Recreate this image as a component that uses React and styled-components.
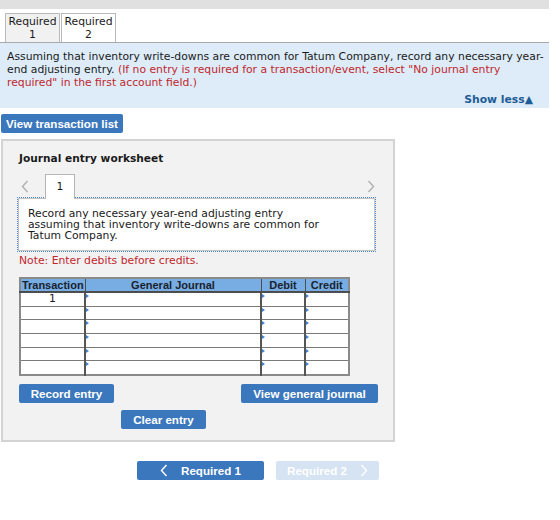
import React from "react";
import styled, { createGlobalStyle } from "styled-components";

const GlobalStyle = createGlobalStyle`
  body {
    margin: 0;
    background: #ffffff;
    font-family: "DejaVu Sans", Verdana, sans-serif;
    color: #1a1a1a;
  }
`;

const Page = styled.div`
  width: 560px;
  height: 520px;
  overflow: hidden;
  display: flex;
  flex-direction: column;
  align-items: flex-start;
`;

const TopBar = styled.div`
  width: 549px;
  height: 9px;
  background: #e0e0e0;
`;

const TabRow = styled.div`
  display: flex;
  margin-top: 4px;
  padding-left: 5px;
  gap: 1px;
`;

const Tab = styled.div`
  width: 53px;
  height: 27px;
  border: 1px solid #b9b9b9;
  border-bottom: none;
  background: ${(p) => (p.$active ? "#ffffff" : "#f1f1f1")};
  font-size: 10.8px;
  line-height: 13px;
  text-align: center;
  padding-top: 1px;
  box-sizing: content-box;
`;

const InfoBox = styled.div`
  box-sizing: border-box;
  width: 549px;
  height: 66px;
  border-top: 1px solid #a9a9a9;
  background: #ddecf8;
  padding: 7px 1px 0 7px;
  display: flex;
  flex-direction: column;
`;

const InfoText = styled.p`
  margin: 0;
  font-size: 10.8px;
  line-height: 13px;
`;

const Red = styled.span`
  color: #c1272d;
`;

const ShowLess = styled.div`
  margin-top: auto;
  align-self: flex-end;
  margin-right: 15px;
  margin-bottom: 2px;
  font-weight: bold;
  font-size: 10.8px;
  line-height: 13px;
  color: #1d5c97;
`;

const Button = styled.button`
  font-family: "Liberation Sans", Arial, sans-serif;
  font-weight: bold;
  font-size: 11.6px;
  color: #ffffff;
  background: ${(p) => (p.$disabled ? "#d5e3f2" : "#3b77bc")};
  border: none;
  border-radius: 2px;
  height: 19px;
  width: ${(p) => p.$w}px;
  padding: 0;
  display: flex;
  align-items: center;
  justify-content: center;
  gap: 13px;
  cursor: pointer;
`;

const TopButton = styled(Button)`
  margin-top: 6px;
  margin-left: 1px;
`;

const Panel = styled.div`
  margin-top: 6px;
  margin-left: 1px;
  width: 374px;
  height: 299px;
  background: #f2f2f2;
  border: 2px solid #d3d3d3;
  padding-left: 16px;
  display: flex;
  flex-direction: column;
  align-items: flex-start;
  box-sizing: content-box;
`;

const Title = styled.div`
  margin-top: 11px;
  font-weight: bold;
  font-size: 10.6px;
  line-height: 13px;
`;

const NavRow = styled.div`
  margin-top: 9px;
  margin-left: -1px;
  width: 358px;
  display: flex;
  align-items: center;
  position: relative;
  z-index: 1;
  margin-bottom: -1px;
`;

const Arrow = styled.svg`
  width: 8px;
  height: 13px;
  margin-left: ${(p) => p.$ml || 0}px;
  margin-right: ${(p) => p.$mr || 0}px;
`;

const SmallTab = styled.div`
  margin-left: 16px;
  width: 28px;
  height: 24px;
  background: #ffffff;
  border: 1px solid #b5b5b5;
  border-bottom: none;
  font-size: 10.8px;
  line-height: 24px;
  text-align: center;
`;

const Spacer = styled.div`
  flex: 1;
`;

const DescBox = styled.div`
  width: 346px;
  height: 42px;
  background: #ffffff;
  border: 1px solid #c3c3c3;
  outline: 1px dotted #4d86d0;
  padding: 9px 0 0 9px;
  box-sizing: content-box;
  margin-left: -1px;
  font-size: 10.8px;
  line-height: 11px;
`;

const Note = styled.div`
  margin-top: 3px;
  font-size: 10.8px;
  line-height: 13px;
  color: #c1272d;
`;

const Table = styled.table`
  margin-top: 10px;
  border-collapse: collapse;
  border: 2px solid #8a8a8a;
  table-layout: fixed;
  width: 329px;
`;

const Col = styled.col`
  width: ${(p) => p.$w}px;
`;

const Th = styled.th`
  background: #78ade4;
  border: 1px solid #4d4d4d;
  border-bottom: 2px solid #4d4d4d;
  font-family: "Liberation Sans", Arial, sans-serif;
  font-size: 11px;
  font-weight: bold;
  color: #18222e;
  height: 12px;
  padding: 0;
  line-height: 12px;
  text-align: center;
  overflow: hidden;
  white-space: nowrap;
`;

const Td = styled.td`
  background: #ffffff;
  border: 1px solid #7a7a7a;
  border-left: ${(p) => (p.$marker ? "2px solid #555" : "1px solid #7a7a7a")};
  height: 12.7px;
  padding: 0;
  font-size: 10.8px;
  line-height: 12px;
  text-align: center;
  position: relative;
  &::before {
    content: "";
    display: ${(p) => (p.$marker ? "block" : "none")};
    position: absolute;
    left: 0;
    top: 1px;
    border-top: 2px solid transparent;
    border-bottom: 2px solid transparent;
    border-left: 3px solid #3e82d6;
  }
`;

const ButtonRow = styled.div`
  margin-top: 8px;
  width: 359px;
  display: flex;
  justify-content: space-between;
`;

const ClearRow = styled.div`
  margin-top: 7px;
  margin-left: 102px;
`;

const BottomNav = styled.div`
  margin-top: 19px;
  margin-left: 137px;
  display: flex;
  gap: 12px;
`;

const ChevronLeft = ({ color = "#b0b0b0", ml, mr }) => (
  <Arrow viewBox="0 0 8 13" $ml={ml} $mr={mr}>
    <path d="M6.5 1 L1.5 6.5 L6.5 12" fill="none" stroke={color} strokeWidth="1.4" />
  </Arrow>
);

const ChevronRight = ({ color = "#b0b0b0", ml, mr }) => (
  <Arrow viewBox="0 0 8 13" $ml={ml} $mr={mr}>
    <path d="M1.5 1 L6.5 6.5 L1.5 12" fill="none" stroke={color} strokeWidth="1.4" />
  </Arrow>
);

const rows = [1, 2, 3, 4, 5, 6];

export default function App() {
  return (
    <Page>
      <GlobalStyle />
      <TopBar />
      <TabRow>
        <Tab>
          Required
          <br />1
        </Tab>
        <Tab $active>
          Required
          <br />2
        </Tab>
      </TabRow>
      <InfoBox>
        <InfoText>
          Assuming that inventory write-downs are common for Tatum Company, record any necessary year-end
          adjusting entry.{" "}
          <Red>
            (If no entry is required for a transaction/event, select "No journal entry required" in the first
            account field.)
          </Red>
        </InfoText>
        <ShowLess>Show less▲</ShowLess>
      </InfoBox>
      <TopButton $w={122}>View transaction list</TopButton>
      <Panel>
        <Title>Journal entry worksheet</Title>
        <NavRow>
          <ChevronLeft ml={3} />
          <SmallTab>1</SmallTab>
          <Spacer />
          <ChevronRight mr={1} />
        </NavRow>
        <DescBox>
          Record any necessary year-end adjusting entry
          <br />
          assuming that inventory write-downs are common for
          <br />
          Tatum Company.
        </DescBox>
        <Note>Note: Enter debits before credits.</Note>
        <Table>
          <colgroup>
            <Col $w={65} />
            <Col $w={176} />
            <Col $w={44} />
            <Col $w={44} />
          </colgroup>
          <thead>
            <tr>
              <Th>Transaction</Th>
              <Th>General Journal</Th>
              <Th>Debit</Th>
              <Th>Credit</Th>
            </tr>
          </thead>
          <tbody>
            {rows.map((r) => (
              <tr key={r}>
                <Td>{r === 1 ? "1" : ""}</Td>
                <Td $marker />
                <Td $marker />
                <Td $marker />
              </tr>
            ))}
          </tbody>
        </Table>
        <ButtonRow>
          <Button $w={95}>Record entry</Button>
          <Button $w={137}>View general journal</Button>
        </ButtonRow>
        <ClearRow>
          <Button $w={85}>Clear entry</Button>
        </ClearRow>
      </Panel>
      <BottomNav>
        <Button $w={127}>
          <ChevronLeft color="#ffffff" />
          Required 1
        </Button>
        <Button $w={103} $disabled>
          Required 2
          <ChevronRight color="#ffffff" />
        </Button>
      </BottomNav>
    </Page>
  );
}
